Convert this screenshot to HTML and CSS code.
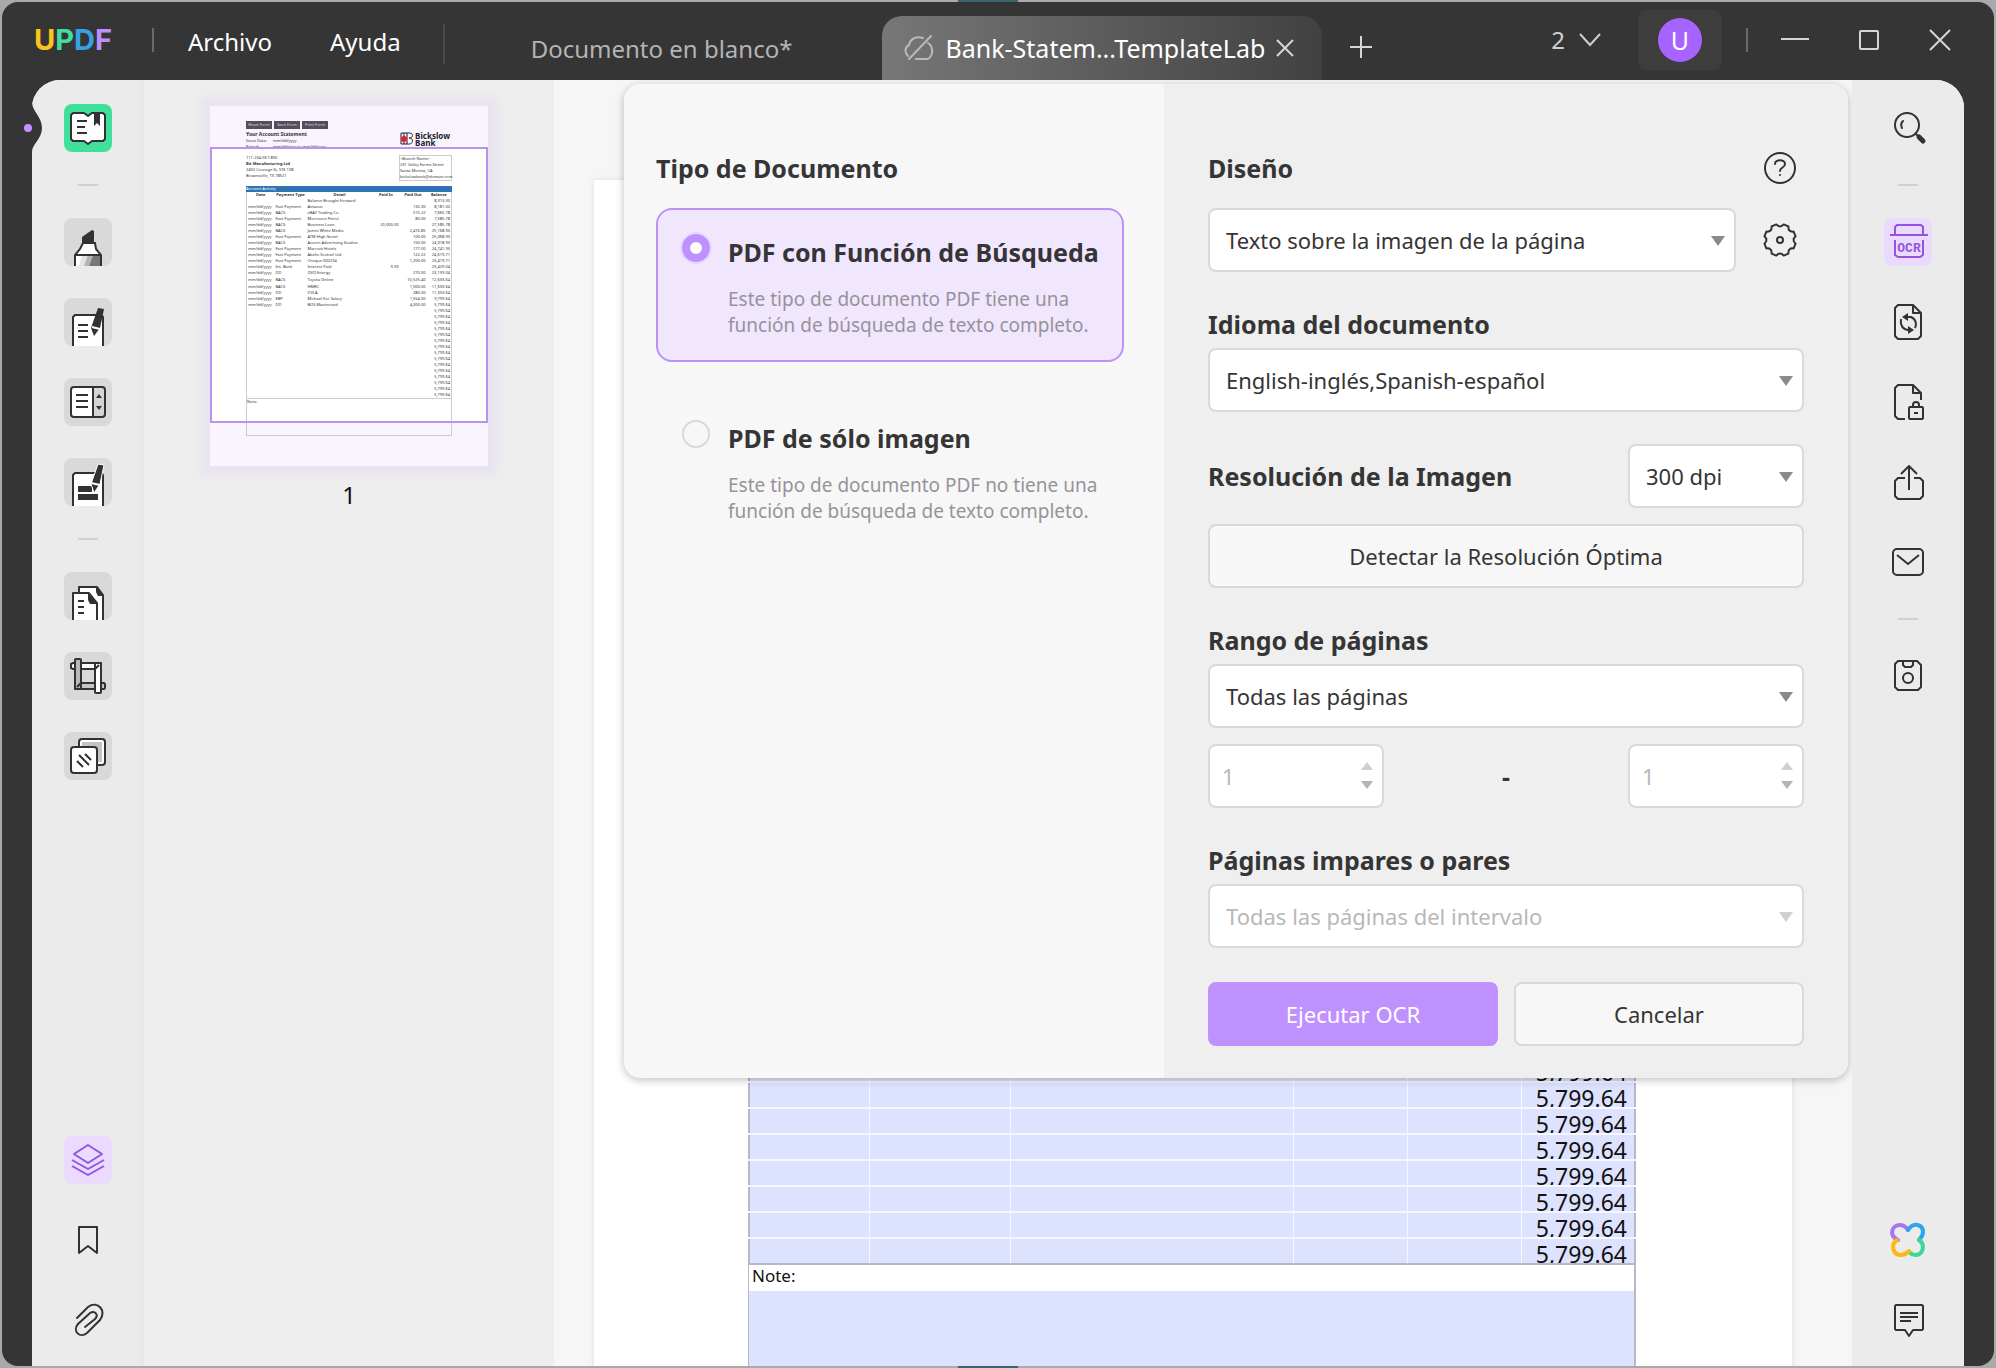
FILE: index.html
```html
<!DOCTYPE html>
<html lang="es">
<head>
<meta charset="utf-8">
<meta name="viewport" content="width=device-width, initial-scale=1">
<title>UPDF</title>
<link rel="stylesheet" href="styles.css">
</head>
<body>
<div class="window">

<header class="titlebar">
  <div class="wordmark" aria-label="UPDF"><span class="w-u">U</span><span class="w-p">P</span><span class="w-d">D</span><span class="w-f">F</span></div>
  <span class="bar-sep"></span>
  <nav class="menu">
    <button type="button">Archivo</button>
    <button type="button">Ayuda</button>
  </nav>
  <span class="bar-sep bar-sep-tall"></span>
  <div class="tabs">
    <button type="button" class="tab">Documento en blanco*</button>
    <div class="tab tab-active">
      <svg width="30" height="26" viewBox="0 0 30 26" fill="none" stroke="#b9b9b9" stroke-width="2" stroke-linecap="round"><path d="M4 21C0 17 1 12 5 10C6 4 12 1 19 3M27 1L5 24M24 8C29 11 30 20 24 24H12"/></svg>
      <span class="tab-name">Bank-Statem...TemplateLab</span>
      <button type="button" aria-label="Cerrar pestaña"><svg width="18" height="18" viewBox="0 0 18 18" stroke="#d6d6d6" stroke-width="2"><path d="M1 1L17 17M17 1L1 17"/></svg></button>
    </div>
    <button type="button" class="tab-add" aria-label="Nueva pestaña"><svg width="24" height="24" viewBox="0 0 24 24" stroke="#d6d6d6" stroke-width="2"><path d="M12 1V23M1 12H23"/></svg></button>
  </div>
  <button type="button" class="tab-count">2 <svg width="22" height="14" viewBox="0 0 22 14" fill="none" stroke="#d0d0d0" stroke-width="2"><path d="M1 1L11 12L21 1"/></svg></button>
  <button type="button" class="account"><span class="avatar">U</span></button>
  <span class="bar-sep"></span>
  <div class="window-buttons">
    <button type="button" aria-label="Minimizar"><svg width="28" height="24" viewBox="0 0 28 24" stroke="#d6d6d6" stroke-width="2"><path d="M0 11H28"/></svg></button>
    <button type="button" aria-label="Maximizar"><svg width="20" height="20" viewBox="0 0 20 20" fill="none" stroke="#d6d6d6" stroke-width="2"><rect x="1" y="1" width="18" height="18" rx="1"/></svg></button>
    <button type="button" aria-label="Cerrar"><svg width="22" height="22" viewBox="0 0 22 22" stroke="#d6d6d6" stroke-width="2"><path d="M1 1L21 21M21 1L1 21"/></svg></button>
  </div>
</header>

<div class="workspace">
  <aside class="tools tools-left">
    <div class="handle"><svg width="32" height="56" viewBox="0 0 32 56"><path d="M20 3C21 12 30 17 30 28S20 44 20 52L16 52V3Z" fill="#353535"/><circle cx="16" cy="28" r="4" fill="#bf91ff"/></svg></div>
    <div class="tool-group">
      <button type="button" class="tool tile-green" aria-label="Lector"><svg width="48" height="48" viewBox="0 0 48 48"><path d="M9 9H20L24 12L28 9H39L41 11V35L39 37H28L24 40L20 37H9L7 35V11Z" fill="#fff" stroke="#323232" stroke-width="2" stroke-linejoin="round"/><path d="M13 17H23M13 23H21M13 29H23" stroke="#323232" stroke-width="2"/><path d="M30 9H36V22L33 19L30 22Z" fill="#323232"/></svg></button>
      <span class="tool-sep"></span>
      <button type="button" class="tool tile" aria-label="Comentar"><svg width="48" height="48" viewBox="0 0 48 48"><path d="M19 25H31L32 31L37 37V49H11V37L16 31Z" fill="#fff" stroke="#323232" stroke-width="2"/><path d="M18 37H25L21 48H15Z" fill="#e4e4e4"/><path d="M24 37H29L25 48H20Z" fill="#b4b4b4"/><path d="M29 37H36V48H25Z" fill="#777"/><path d="M11 37H37" stroke="#323232" stroke-width="2"/><path d="M18 25V19L28 12L30 13V25Z" fill="#323232"/></svg></button>
      <button type="button" class="tool tile" aria-label="Editar PDF"><svg width="48" height="48" viewBox="0 0 48 48"><path d="M9 49V19L11 17H37L39 19V49" fill="#fff" stroke="#323232" stroke-width="2"/><path d="M14 27H24M14 33H24M14 39H24" stroke="#323232" stroke-width="2"/><path d="M34 10L40 11L36 30L30 38L27 30Z" fill="#323232"/><path d="M28 29L36 31" stroke="#fff" stroke-width="2"/></svg></button>
      <button type="button" class="tool tile" aria-label="Organizar páginas"><svg width="48" height="48" viewBox="0 0 48 48"><rect x="7" y="9" width="34" height="30" rx="3" fill="#fff"/><path d="M29 9H39L41 11V37L39 39H29Z" fill="#d4d4d4"/><rect x="7" y="9" width="34" height="30" rx="3" fill="none" stroke="#323232" stroke-width="2"/><path d="M29 9V39M12 17H24M12 23H24M12 29H24" stroke="#323232" stroke-width="2"/><path d="M32 20L35 16L38 20ZM32 28L35 32L38 28Z" fill="#323232"/></svg></button>
      <button type="button" class="tool tile" aria-label="Formulario"><svg width="48" height="48" viewBox="0 0 48 48"><path d="M9 49V17L11 15H37L39 17V49" fill="#fff" stroke="#323232" stroke-width="2"/><path d="M14 28H28V34H14ZM14 36H34V42H14Z" fill="#323232"/><path d="M34 6L40 7L36 26L30 35L27 26Z" fill="#323232" stroke="#fff" stroke-width="1"/><path d="M27 25L36 27" stroke="#fff" stroke-width="2"/></svg></button>
      <span class="tool-sep"></span>
      <button type="button" class="tool tile" aria-label="Herramientas de página"><svg width="48" height="48" viewBox="0 0 48 48"><path d="M15 49V15H33L39 23V49" fill="#fff" stroke="#323232" stroke-width="2" stroke-linejoin="round"/><path d="M32 14L40 24H34L32 20Z" fill="#323232"/><path d="M9 49V21H25L33 31V49" fill="#fff" stroke="#323232" stroke-width="2" stroke-linejoin="round"/><path d="M24 20L34 32H26L24 28Z" fill="#323232"/><path d="M14 29H20M14 35H20M14 41H20" stroke="#323232" stroke-width="2"/></svg></button>
      <button type="button" class="tool tile" aria-label="Recortar"><svg width="48" height="48" viewBox="0 0 48 48" stroke="#323232" stroke-width="2" stroke-linejoin="round"><path d="M9 11H37V17H9L7 16V12Z" fill="#fff"/><path d="M12 31H40L41 32V36L40 37H11Z" fill="#c6c6c6"/><rect x="11" y="7" width="6" height="30" rx="1" fill="#b9b9b9"/><rect x="31" y="11" width="6" height="30" rx="1" fill="#fff"/><path d="M13 35L17 31M31 17L35 13"/></svg></button>
      <button type="button" class="tool tile" aria-label="Lote"><svg width="48" height="48" viewBox="0 0 48 48" fill="none" stroke="#323232" stroke-width="2"><rect x="15" y="7" width="26" height="26" rx="3" fill="#fff"/><path d="M18 10H38V30H18Z" fill="#c4c4c4" stroke="none"/><rect x="7" y="15" width="26" height="26" rx="3" fill="#fff"/><path d="M15 23L25 33M21 22L27 28M13 29L19 35"/></svg></button>
    </div>
    <div class="tool-group">
      <button type="button" class="tool tile-violet" aria-label="Miniaturas"><svg width="48" height="48" viewBox="0 0 48 48" fill="none" stroke="#9355e0" stroke-width="2" stroke-linejoin="round"><path d="M24 9L38 18L24 27L10 18Z"/><path d="M8 24L24 33L40 24M8 30L24 39L40 30"/></svg></button>
      <button type="button" class="tool" aria-label="Marcadores"><svg width="48" height="48" viewBox="0 0 48 48" fill="none" stroke="#323232" stroke-width="2" stroke-linejoin="round"><path d="M15 11H33V37L24 30L15 37Z"/></svg></button>
      <button type="button" class="tool" aria-label="Adjuntos"><svg width="48" height="48" viewBox="0 0 48 48" fill="none" stroke="#323232" stroke-width="2" stroke-linecap="round"><path d="M13 22L24 11C34 4 43 15 36 24L23 37C16 43 8 35 14 28L26 17C31 14 35 19 31 23L21 31"/></svg></button>
    </div>
  </aside>

  <section class="thumbs" aria-label="Miniaturas">
    <figure class="thumb">
      <div class="sheet">
        <div class="mini-buttons"><span>Reset Form</span><span>Save Form</span><span>Print Form</span></div>
        <div class="mini-head">
          <div><b class="mini-title">Your Account Statement</b><p><span>Issue Date:</span>mm/dd/yyyy</p><p><span>Period:</span>mm/dd/yyyy to mm/dd/yyyy</p></div>
          <div class="mini-bank"><svg width="13" height="13" viewBox="0 0 13 13" fill="none" stroke="#201c2c" stroke-width="1"><path d="M1 1H7V12H1ZM7 1C14 0 14 6 9 6C14 6 14 13 7 12M4 1V12"/><circle cx="4" cy="7" r="3" fill="#e3202c" stroke="none"/></svg><b>Bickslow<br>Bank</b></div>
        </div>
        <div class="mini-address">
          <div><p>111-234-567-890</p><b>Bit Manufacturing Ltd</b><p>2450 Courage St, STE 108</p><p>Brownsville, TX 78521</p></div>
          <div class="mini-branch"><p>&lt;Branch Name&gt;</p><p>231 Valley Farms Street</p><p>Santa Monica, CA</p><p>bickslowbank@domain.com</p></div>
        </div>
        <div class="mini-bar">Account Activity</div>
        <table class="mini-table">
          <colgroup><col class="c1"><col class="c2"><col class="c3"><col class="c4"><col class="c5"><col class="c6"></colgroup>
          <thead><tr><th>Date</th><th>Payment Type</th><th>Detail</th><th>Paid In</th><th>Paid Out</th><th>Balance</th></tr></thead>
          <tbody>
          <tr><td></td><td></td><td>Balance Brought Forward</td><td></td><td></td><td>8,313.30</td></tr>
          <tr><td>mm/dd/yyyy</td><td>Fast Payment</td><td>Amazon</td><td></td><td>132.30</td><td>8,181.00</td></tr>
          <tr><td>mm/dd/yyyy</td><td>BACS</td><td>eBAY Trading Co.</td><td></td><td>515.22</td><td>7,665.78</td></tr>
          <tr><td>mm/dd/yyyy</td><td>Fast Payment</td><td>Morrisons Petrol</td><td></td><td>80.00</td><td>7,585.78</td></tr>
          <tr><td>mm/dd/yyyy</td><td>BACS</td><td>Business Loan</td><td>20,000.00</td><td></td><td>27,585.78</td></tr>
          <tr><td>mm/dd/yyyy</td><td>BACS</td><td>James White Media</td><td></td><td>2,416.85</td><td>25,168.93</td></tr>
          <tr><td>mm/dd/yyyy</td><td>Fast Payment</td><td>ATM High Street</td><td></td><td>100.00</td><td>25,068.93</td></tr>
          <tr><td>mm/dd/yyyy</td><td>BACS</td><td>Accorn Advertising Studios</td><td></td><td>150.00</td><td>24,918.93</td></tr>
          <tr><td>mm/dd/yyyy</td><td>Fast Payment</td><td>Marriott Hotels</td><td></td><td>177.00</td><td>24,741.93</td></tr>
          <tr><td>mm/dd/yyyy</td><td>Fast Payment</td><td>Abelio Scotrail Ltd</td><td></td><td>122.22</td><td>24,619.71</td></tr>
          <tr><td>mm/dd/yyyy</td><td>Fast Payment</td><td>Cheque 000234</td><td></td><td>1,200.00</td><td>23,419.71</td></tr>
          <tr><td>mm/dd/yyyy</td><td>Int. Bank</td><td>Interest Paid</td><td>9.33</td><td></td><td>23,429.04</td></tr>
          <tr><td>mm/dd/yyyy</td><td>DD</td><td>OVO Energy</td><td></td><td>270.00</td><td>23,159.04</td></tr>
          <tr class="tall"><td>mm/dd/yyyy</td><td>BACS</td><td>Toyota Online</td><td></td><td>10,525.40</td><td>12,633.64</td></tr>
          <tr><td>mm/dd/yyyy</td><td>BACS</td><td>HMRC</td><td></td><td>1,000.00</td><td>11,633.64</td></tr>
          <tr><td>mm/dd/yyyy</td><td>DD</td><td>DVLA</td><td></td><td>280.00</td><td>11,353.64</td></tr>
          <tr><td>mm/dd/yyyy</td><td>EBP</td><td>Michael Kor Salary</td><td></td><td>1,554.00</td><td>9,799.64</td></tr>
          <tr><td>mm/dd/yyyy</td><td>DD</td><td>BOS Mastercard</td><td></td><td>4,000.00</td><td>5,799.64</td></tr>
          <tr><td colspan="5"></td><td>5,799.64</td></tr>
          <tr><td colspan="5"></td><td>5,799.64</td></tr>
          <tr><td colspan="5"></td><td>5,799.64</td></tr>
          <tr><td colspan="5"></td><td>5,799.64</td></tr>
          <tr><td colspan="5"></td><td>5,799.64</td></tr>
          <tr><td colspan="5"></td><td>5,799.64</td></tr>
          <tr><td colspan="5"></td><td>5,799.64</td></tr>
          <tr><td colspan="5"></td><td>5,799.64</td></tr>
          <tr><td colspan="5"></td><td>5,799.64</td></tr>
          <tr><td colspan="5"></td><td>5,799.64</td></tr>
          <tr><td colspan="5"></td><td>5,799.64</td></tr>
          <tr><td colspan="5"></td><td>5,799.64</td></tr>
          <tr><td colspan="5"></td><td>5,799.64</td></tr>
          <tr><td colspan="5"></td><td>5,799.64</td></tr>
          <tr><td colspan="5"></td><td>5,799.64</td></tr>
          </tbody>
        </table>
        <div class="mini-note">Note:</div>
        <div class="viewport-frame"></div>
      </div>
      <figcaption>1</figcaption>
    </figure>
  </section>

  <main class="document">
    <article class="page">
      <table class="statement">
        <colgroup><col class="s1"><col class="s2"><col><col class="s4"><col class="s4"><col class="s4"></colgroup>
        <tbody>
        <tr><td></td><td></td><td></td><td></td><td></td><td><div>5,799.64</div></td></tr>
        <tr><td></td><td></td><td></td><td></td><td></td><td><div>5,799.64</div></td></tr>
        <tr><td></td><td></td><td></td><td></td><td></td><td><div>5,799.64</div></td></tr>
        <tr><td></td><td></td><td></td><td></td><td></td><td><div>5,799.64</div></td></tr>
        <tr><td></td><td></td><td></td><td></td><td></td><td><div>5,799.64</div></td></tr>
        <tr><td></td><td></td><td></td><td></td><td></td><td><div>5,799.64</div></td></tr>
        <tr><td></td><td></td><td></td><td></td><td></td><td><div>5,799.64</div></td></tr>
        <tr><td></td><td></td><td></td><td></td><td></td><td><div>5,799.64</div></td></tr>
        </tbody>
      </table>
      <div class="note">Note:</div>
      <div class="note-field"></div>
    </article>

    <form class="ocr" onsubmit="return false">
      <fieldset class="types">
        <legend>Tipo de Documento</legend>
        <label class="type">
          <input type="radio" name="tipo" checked>
          <span class="type-text"><strong>PDF con Función de Búsqueda</strong><small>Este tipo de documento PDF tiene una<br>función de búsqueda de texto completo.</small></span>
        </label>
        <label class="type">
          <input type="radio" name="tipo">
          <span class="type-text"><strong>PDF de sólo imagen</strong><small>Este tipo de documento PDF no tiene una<br>función de búsqueda de texto completo.</small></span>
        </label>
      </fieldset>

      <div class="options">
        <div class="row row-head">
          <label for="diseno">Diseño</label>
          <button type="button" class="icon-button" aria-label="Ayuda"><svg width="48" height="48" viewBox="0 0 48 48" fill="none" stroke="#323232" stroke-width="2" stroke-linecap="round"><circle cx="24" cy="24" r="15"/><path d="M19 20C19 15 29 15 29 20C29 24 24 23 24 27"/><circle cx="24" cy="31" r="1" fill="#323232" stroke="none"/></svg></button>
        </div>
        <div class="row">
          <span class="select grow"><select id="diseno"><option>Texto sobre la imagen de la página</option></select></span>
          <button type="button" class="icon-button" aria-label="Ajustes"><svg width="48" height="48" viewBox="0 0 48 48" fill="none" stroke="#323232" stroke-width="2" stroke-linejoin="round"><path d="M20.3 8.4Q24 12.5 27.7 8.4L32.4 10.4Q31.9 16.1 37.6 15.6L39.6 20.3Q35.5 24 39.6 27.7L37.6 32.4Q31.9 31.9 32.4 37.6L27.7 39.6Q24 35.5 20.3 39.6L15.6 37.6Q16.1 31.9 10.4 32.4L8.4 27.7Q12.5 24 8.4 20.3L10.4 15.6Q16.1 16.1 15.6 10.4Z"/><circle cx="24" cy="24" r="3"/></svg></button>
        </div>
        <label class="field-label" for="idioma">Idioma del documento</label>
        <span class="select"><select id="idioma"><option>English-inglés,Spanish-español</option></select></span>
        <div class="row row-split row-resolution">
          <label for="dpi">Resolución de la Imagen</label>
          <span class="select short"><select id="dpi"><option>300 dpi</option></select></span>
        </div>
        <button type="button" class="button detect">Detectar la Resolución Óptima</button>
        <label class="field-label" for="rango">Rango de páginas</label>
        <span class="select"><select id="rango"><option>Todas las páginas</option></select></span>
        <div class="row row-split row-range">
          <span class="spin short"><input type="number" value="1" aria-label="Desde" disabled></span>
          <b>-</b>
          <span class="spin short"><input type="number" value="1" aria-label="Hasta" disabled></span>
        </div>
        <label class="field-label" for="pares">Páginas impares o pares</label>
        <span class="select is-off"><select id="pares" disabled><option>Todas las páginas del intervalo</option></select></span>
        <div class="row actions">
          <button type="submit" class="button primary">Ejecutar OCR</button>
          <button type="button" class="button">Cancelar</button>
        </div>
      </div>
    </form>
  </main>

  <aside class="tools tools-right">
    <div class="tool-group">
      <button type="button" class="tool" aria-label="Buscar"><svg width="48" height="48" viewBox="0 0 48 48" fill="none" stroke="#323232" stroke-width="2" stroke-linecap="round"><circle cx="23" cy="21" r="12"/><path d="M19 17C17 19 17 22 18 24M32 30L35 33"/><path d="M35 33L39 37" stroke-width="5"/></svg></button>
      <span class="tool-sep"></span>
      <button type="button" class="tool tile-violet" aria-label="OCR"><svg width="48" height="48" viewBox="0 0 48 48" fill="none" stroke="#9355e0" stroke-width="2"><path d="M11 17V9L13 7H37L39 9V17M6 17H44M11 22V37L14 39H36L39 37V22"/><text x="25" y="34" text-anchor="middle" class="ocr-glyph" fill="#9355e0" stroke="none">OCR</text></svg></button>
      <button type="button" class="tool" aria-label="Convertir"><svg width="48" height="48" viewBox="0 0 48 48" fill="none" stroke="#323232" stroke-width="2" stroke-linejoin="round"><path d="M14 7H29L37 15V38L34 41H14L11 38V10ZM29 7V15H37"/><path d="M31 30C33 26 32 21 27 19H23M17 21C16 26 18 32 25 32"/><path d="M24 15V23L18 19ZM24 28V36L30 32Z" fill="#323232" stroke="none"/></svg></button>
      <button type="button" class="tool" aria-label="Proteger"><svg width="48" height="48" viewBox="0 0 48 48" fill="none" stroke="#323232" stroke-width="2" stroke-linejoin="round"><path d="M21 41H14L11 38V10L14 7H29L37 15V22M29 7V15H37"/><rect x="25" y="29" width="14" height="12" rx="1"/><path d="M29 29V27C29 23 35 23 35 27V29M30 35H34"/></svg></button>
      <button type="button" class="tool" aria-label="Compartir"><svg width="48" height="48" viewBox="0 0 48 48" fill="none" stroke="#323232" stroke-width="2" stroke-linejoin="round"><path d="M21 20H14L11 23V38L14 41H36L39 38V23L36 20H30M25 32V9M17 16L25 8L33 16"/></svg></button>
      <button type="button" class="tool" aria-label="Correo"><svg width="48" height="48" viewBox="0 0 48 48" fill="none" stroke="#323232" stroke-width="2"><rect x="9" y="11" width="30" height="26" rx="4"/><path d="M13 17L24 26L35 17"/></svg></button>
      <span class="tool-sep"></span>
      <button type="button" class="tool" aria-label="Guardar"><svg width="48" height="48" viewBox="0 0 48 48" fill="none" stroke="#323232" stroke-width="2" stroke-linejoin="round"><path d="M14 9H33L37 13V35L34 38H14L11 35V12ZM19 9V13L21 15H27L29 13V9"/><circle cx="24" cy="26" r="5"/></svg></button>
    </div>
    <div class="tool-group">
      <button type="button" class="tool" aria-label="Asistente IA"><svg width="48" height="48" viewBox="0 0 48 48" fill="none" stroke-width="4" stroke-linecap="round"><path d="M14 24C4 19 8 9 16 9C20 9 22 11 24 14" stroke="#a875f2"/><path d="M24 14C30 5 39 9 39 16C39 20 37 22 35 24" stroke="#2da5ef"/><path d="M35 24C42 29 39 39 31 39C28 39 26 37 25 36" stroke="#3fd699"/><path d="M13 24C6 29 9 39 17 39C21 39 23 37 25 35" stroke="#fbb90f"/></svg></button>
      <button type="button" class="tool" aria-label="Comentarios"><svg width="48" height="48" viewBox="0 0 48 48" fill="none" stroke="#323232" stroke-width="2" stroke-linejoin="round"><path d="M12 9H38L39 10V33L38 34H29L25 40L21 34H12L11 33V10Z"/><path d="M16 17H34M16 21H34M16 25H27"/></svg></button>
    </div>
  </aside>
</div>
</div>
</body>
</html>
```
FILE: styles.css
```css
* { box-sizing: border-box; }

:root {
  --ink: #353535;
  --line: #d9d9d9;
  --violet: #bf91ff;
}

body {
  margin: 0;
  min-height: 100vh;
  padding: 2px;
  display: flex;
  background: #a9a9ab linear-gradient(to right, transparent 48%, #39666c 48%, #39666c 51%, transparent 51%);
  font-family: "Noto Sans", "Open Sans", sans-serif;
  font-size: 22px;
  color: var(--ink);
}

button, input, select { font: inherit; color: inherit; }
button { border: 0; padding: 0; background: none; cursor: pointer; }
svg { display: block; }

.window {
  flex: 1;
  min-width: 0;
  height: calc(100vh - 4px);
  display: flex;
  flex-direction: column;
  background: var(--ink);
  border-radius: 16px;
  overflow: hidden;
}

/* Title bar */
.titlebar {
  flex: 0 0 78px;
  min-height: 0;
  display: flex;
  align-items: flex-start;
  color: #fff;
  font-size: 24px;
}
.wordmark {
  width: 116px;
  padding-left: 32px;
  font-family: Inter, sans-serif;
  font-size: 29px;
  font-weight: 700;
  line-height: 76px;
}
.w-u { color: #fcc419; }
.w-p { color: #41dd9a; }
.w-d { color: #38a0e4; }
.w-f { color: #bb8fff; }
.bar-sep { width: 2px; height: 24px; margin-top: 26px; background: #6a6a6a; }
.wordmark + .bar-sep { margin-left: 34px; }
.bar-sep-tall { height: 40px; margin-top: 22px; background: #4b4b4b; }
.menu { display: flex; gap: 58px; padding: 0 42px 0 34px; line-height: 80px; }
.tabs { flex: 1; display: flex; align-items: flex-start; }
.tab { height: 64px; margin-top: 14px; padding: 0 88px 0 86px; color: #b4b4b4; white-space: nowrap; }
.tab-active {
  width: 440px;
  margin-left: 2px;
  display: flex;
  align-items: center;
  justify-content: space-between;
  padding: 0 28px 0 22px;
  border-radius: 20px 20px 0 0;
  background: linear-gradient(to right, #777, #414141);
  color: #fff;
  font-size: 25px;
}
.tab-add { margin: 33px 0 0 27px; }
.tab-count { display: flex; align-items: center; gap: 14px; line-height: 76px; color: #d0d0d0; padding-right: 37px; }
.account { width: 84px; height: 60px; margin-top: 8px; margin-right: 24px; border-radius: 8px; background: #3d3d3d; display: grid; place-items: center; }
.avatar { width: 44px; height: 44px; border-radius: 50%; background: #a763ff; color: #fff; line-height: 44px; font-size: 25px; }
.window-buttons { display: flex; align-items: center; gap: 50px; height: 76px; padding: 0 43px 0 33px; }

/* Workspace */
.workspace {
  flex: 1;
  min-height: 0;
  margin: 0 30px;
  display: flex;
  border-radius: 28px 28px 0 0;
  background: #f6f6f6;
}
.tools {
  flex: 0 0 112px;
  display: flex;
  flex-direction: column;
  justify-content: space-between;
  padding: 24px 32px 22px;
  background: #ebebeb;
}
.tools-left { position: relative; border-radius: 28px 0 0 0; box-shadow: inset -9px 0 5px -5px #e5e5e5; }
.tools-right { border-radius: 0 28px 0 0; }
.handle { position: absolute; left: -20px; top: 20px; }
.tool-group { display: flex; flex-direction: column; align-items: center; gap: 32px; }
.tool { width: 48px; height: 48px; border-radius: 8px; overflow: hidden; }
.tile { background: #d9d9d9; }
.tile-green { background: #40e09c; }
.tile-violet { background: #e9dafe; }
.tool-sep { width: 20px; height: 2px; background: #d0d0d0; }
.ocr-glyph { font: 700 13px "Liberation Mono", monospace; }

/* Thumbnails */
.thumbs { flex: 0 0 410px; background: #eee; }
.thumb { width: 278px; margin: 26px 0 0 66px; }
.thumb figcaption { margin-top: 12px; font-size: 24px; line-height: 34px; text-align: center; color: #111; }
.sheet {
  position: relative;
  height: 360px;
  padding: 15px 36px 0;
  background: linear-gradient(to bottom, #f9f4fe 41px, #fff 41px, #fff 317px, #f9f4fe 317px);
  box-shadow: 0 0 10px 10px #e8e4f0;
  color: #333;
  font-size: 4px;
  line-height: 6px;
}
.sheet p { margin: 0; }
.viewport-frame { position: absolute; left: 0; right: 0; top: 41px; height: 276px; border: 2px solid #bb93ee; }
.mini-buttons { display: flex; gap: 2px; height: 8px; }
.mini-buttons span { width: 26px; background: #554c5c; color: #ddd; line-height: 8px; text-align: center; }
.mini-head { display: flex; justify-content: space-between; height: 26px; padding-top: 2px; }
.mini-head p span { display: inline-block; width: 27px; }
.mini-title { display: block; font-size: 5px; line-height: 7px; }
.mini-bank { display: flex; gap: 2px; padding: 1px 2px 0 0; color: #201c2c; font-size: 8px; line-height: 7px; }
.mini-address { display: flex; justify-content: space-between; height: 31px; }
.mini-address b { display: block; }
.mini-branch { width: 53px; height: 26px; border: 1px solid #ccc; }
.mini-bar { height: 6px; background: #2e74b5; color: #fff; line-height: 6px; }
.mini-table { width: 100%; table-layout: fixed; border-collapse: collapse; border: 1px solid #ccc; border-top: 0; }
.mini-table tr { height: 6px; }
.mini-table .tall { height: 8px; }
.mini-table th, .mini-table td { padding: 0 1px; text-align: right; white-space: nowrap; line-height: 6px; }
.mini-table th { text-align: center; }
.mini-table td:nth-child(-n+3):not(:last-child) { text-align: left; }
.c1 { width: 28px; } .c2 { width: 32px; } .c3 { width: 66px; } .c4 { width: 27px; } .c5 { width: 27px; }
.mini-note { height: 37px; border: 1px solid #ccc; border-top: 0; }

/* Document page */
.document { flex: 1; min-width: 0; position: relative; overflow: hidden; }
.page {
  min-height: 1286px;
  margin: 100px 60px 0 40px;
  padding: 875px 156px 0 154px;
  background: #fff;
  box-shadow: 0 0 6px #ddd;
}
.statement { width: 100%; table-layout: fixed; border-collapse: collapse; border: 2px solid #b9b9c6; background: #dde3ff; }
.statement tr { height: 26px; }
.statement td { padding: 0; border: 2px solid #f6f8ff; border-width: 2px 1px; }
.statement tr:last-child td { border-bottom-color: #b9b9c6; }
.statement td:first-child { border-left-color: #b9b9c6; }
.statement td:last-child { border-right-color: #b9b9c6; }
.statement div { height: 24px; overflow: hidden; padding-right: 7px; font-size: 23px; line-height: 30px; text-align: right; color: #111; }
.s1 { width: 120px; } .s2 { width: 141px; } .s4 { width: 114px; }
.note { height: 26px; padding-left: 3px; border: solid #b9b9c6; border-width: 0 2px 0 1px; font-size: 17px; line-height: 22px; color: #111; }
.note-field { height: 200px; border: solid #b9b9c6; border-width: 0 2px 0 1px; background: #dde3ff; }

/* OCR panel */
.ocr {
  position: absolute;
  left: 70px;
  right: 4px;
  top: 4px;
  display: flex;
  border-radius: 16px;
  background: #f7f7f7;
  box-shadow: 0 2px 8px rgba(0, 0, 0, .25);
  overflow: hidden;
}
.types { flex: 0 0 540px; min-width: 0; margin: 0; padding: 64px 40px 0 32px; border: 0; }
.types legend, .options label, .options b { font-size: 25px; font-weight: 700; }
.types legend { float: left; width: 100%; padding: 0; margin-bottom: 20px; line-height: 40px; }
.type {
  clear: both;
  height: 154px;
  margin-bottom: 32px;
  padding: 24px 20px 0 24px;
  display: flex;
  align-items: flex-start;
  gap: 18px;
  border: 2px solid transparent;
  border-radius: 16px;
}
.type:has(:checked) { background: #f0e6fe; border-color: #bb93f5; }
.type input { appearance: none; flex: none; width: 28px; height: 28px; margin: 0; border: 2px solid var(--line); border-radius: 50%; }
.type input:checked { border: 8px solid var(--violet); background: #fff; box-shadow: 0 0 0 2px #e9dafe; }
.type-text { display: flex; flex-direction: column; gap: 16px; }
.type strong { font-size: 25px; line-height: 36px; white-space: nowrap; }
.type small { font-size: 19px; line-height: 26px; color: #969399; white-space: nowrap; }

.options { flex: 1; display: flex; flex-direction: column; padding: 64px 44px 32px; background: #efefef; }
.row { display: flex; align-items: center; }
.row-head { height: 40px; justify-content: space-between; margin-bottom: 20px; }
.row-split { justify-content: space-between; }
.row-resolution { margin-top: 32px; }
.row-range { margin-top: 16px; }
.field-label { margin-top: 32px; padding-bottom: 4px; line-height: 40px; }
.grow { flex: 1; margin-right: 20px; }
.short { width: 176px; }
.icon-button { width: 48px; height: 48px; }
.select, .spin { position: relative; display: block; }
.select select, .spin input {
  appearance: none;
  display: block;
  width: 100%;
  height: 64px;
  padding: 0 36px 0 16px;
  border: 2px solid var(--line);
  border-radius: 8px;
  background: #fff;
  opacity: 1;
}
.spin input { padding-left: 12px; appearance: textfield; color: #b8b8b8; }
.spin input::-webkit-inner-spin-button { appearance: none; }
.select::after, .spin::before, .spin::after {
  content: "";
  position: absolute;
  right: 11px;
  border: solid transparent;
  border-width: 0 7px;
}
.select::after { top: 28px; border-top: 10px solid #8a8a8a; }
.select.is-off select { color: #b8b8b8; }
.select.is-off::after { border-top-color: #cfcfcf; }
.spin::before, .spin::after { border-width: 0 6px; }
.spin::before { top: 18px; border-bottom: 8px solid #cfcfcf; }
.spin::after { top: 37px; border-top: 8px solid #b4b4b4; }
.button { height: 64px; border: 2px solid var(--line); border-radius: 8px; background: #f7f7f7; }
.detect { margin-top: 16px; }
.actions { gap: 16px; margin-top: 34px; }
.actions .button { flex: 1; }
.actions .primary { border-color: var(--violet); background: var(--violet); color: #fff; }
```
